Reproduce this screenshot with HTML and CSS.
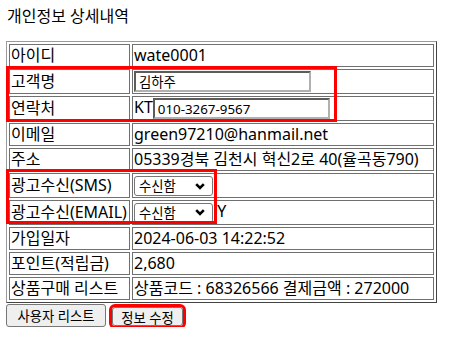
FILE: index.html
```html
<!DOCTYPE html>
<html lang="ko">
<head>
    <meta charset="UTF-8">
    <meta name="viewport" content="width=device-width, initial-scale=1.0">
    <title>개인정보 상세내역</title>
    <link rel="stylesheet" href="styles.css">
</head>
<body>
    <p class="title">개인정보 상세내역</p>
    <div class="detail">
        <table class="info">
            <tr><td class="label">아이디</td><td>wate0001</td></tr>
            <tr class="tall"><td class="label">고객명</td><td><input type="text" class="text" value="김하주"></td></tr>
            <tr class="tall"><td class="label">연락처</td><td>KT<input type="text" class="text" value="010-3267-9567"></td></tr>
            <tr><td class="label">이메일</td><td>green97210@hanmail.net</td></tr>
            <tr><td class="label">주소</td><td>05339경북 김천시 혁신2로 40(율곡동790)</td></tr>
            <tr class="tall">
                <td class="label">광고수신(SMS)</td>
                <td><select class="pick"><option>수신함</option><option>수신안함</option></select></td>
            </tr>
            <tr class="tall">
                <td class="label">광고수신(EMAIL)</td>
                <td><select class="pick"><option>수신함</option><option>수신안함</option></select> Y</td>
            </tr>
            <tr><td class="label">가입일자</td><td>2024-06-03 14:22:52</td></tr>
            <tr><td class="label">포인트(적립금)</td><td>2,680</td></tr>
            <tr><td class="label">상품구매 리스트</td><td>상품코드 : 68326566 결제금액 : 272000</td></tr>
        </table>
        <!-- 수정 가능한 항목 표시 -->
        <div class="mark mark-contact"></div>
        <div class="mark mark-ad"></div>
    </div>
    <div class="actions">
        <button type="button" class="btn btn-list">사용자 리스트</button>
        <button type="button" class="btn btn-edit">정보 수정</button>
    </div>
</body>
</html>
```

FILE: styles.css
```css
body{
    margin: 6px;
    font-family: "Noto Sans", "Noto Sans CJK KR", sans-serif;
    color: #000;
    background: #fff;
}
.title{
    margin: 0 0 15px 1px;
    font-size: 16px;
    line-height: 20px;
}
.detail{
    position: relative;
    width: fit-content;
}
.info{
    border: 1px solid;
    border-color: #9a9a9a #444 #444 #9a9a9a;
    border-spacing: 2px;
    font-size: 16px;
}
.info td{
    border: 1px solid #707070;
    padding: 1px;
    height: 19px;
    line-height: 19px;
    white-space: nowrap;
}
.info .label{
    width: 117px;
}
.info td + td{
    width: 298px;
}
.info .tall td{
    height: 20px;
}
.text{
    box-sizing: border-box;
    width: 177px;
    height: 21px;
    padding: 1px 3px;
    border: 2px inset #b0b0b0;
    font-family: "Noto Sans", "Noto Sans CJK KR", sans-serif;
    font-size: 13.33px;
    vertical-align: middle;
}
.pick{
    -webkit-appearance: none;
    appearance: none;
    box-sizing: border-box;
    width: 79px;
    height: 20px;
    padding: 0 4px;
    border: 1px solid #767676;
    border-radius: 3px;
    font-family: "Noto Sans", "Noto Sans CJK KR", sans-serif;
    font-size: 13.33px;
    line-height: 18px;
    color: #000;
    background: #fff url("data:image/svg+xml,%3Csvg xmlns='http://www.w3.org/2000/svg' width='10' height='7' viewBox='0 0 10 7'%3E%3Cpath d='M1.2 1.2l3.8 3.8l3.8-3.8' fill='none' stroke='%23000' stroke-width='2.6'/%3E%3C/svg%3E") no-repeat right 7px center;
    vertical-align: middle;
}
.mark{
    position: absolute;
    left: 0;
    box-sizing: border-box;
    border: 3px solid #f00;
    pointer-events: none;
}
.mark-contact{
    top: 25px;
    width: 331px;
    height: 56px;
}
.mark-ad{
    top: 128px;
    width: 211px;
    height: 55px;
}
.actions{
    display: flex;
    align-items: flex-start;
    gap: 6px;
    margin-top: 1px;
}
.btn{
    height: 23px;
    padding: 0;
    border: 1px solid #767676;
    border-radius: 3px;
    background: #efefef;
    font-family: "Noto Sans", "Noto Sans CJK KR", sans-serif;
    font-size: 13.33px;
    color: #000;
}
.btn-list{
    width: 100px;
}
.btn-edit{
    width: 71px;
    margin-top: 3px;
    height: 19px;
    outline: 3px solid #f00;
}
```
